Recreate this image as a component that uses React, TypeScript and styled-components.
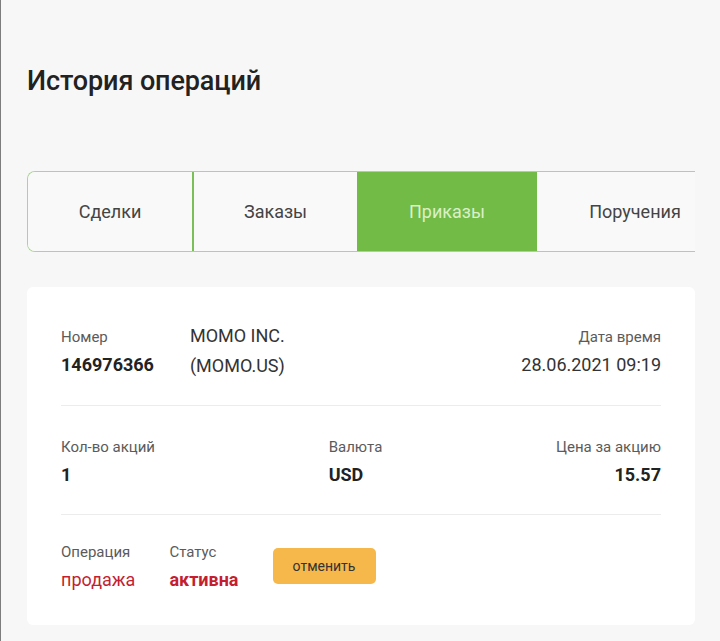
import React, { FC } from 'react';
import styled, { createGlobalStyle } from 'styled-components';

// ---------------- Global ---------------------
const GlobalStyle = createGlobalStyle`
    html, body {
        margin: 0;
        padding: 0;
        background: #f7f7f7;
    }
    body {
        font-family: Roboto, "Noto Sans", Arial, sans-serif;
        color: #222;
    }
`;

const Page = styled.div`
    min-height: 100vh;
    box-sizing: border-box;
    border-left: 1px solid #7d7d7d;
    padding: 64px 25px 20px 26px;
`;

const Title = styled.h1`
    margin: 0;
    font-size: 27px;
    line-height: 34px;
    font-weight: 500;
    color: #222;
    letter-spacing: -0.1px;
`;

// ---------------- Tabs ---------------------
const Tabs = styled.div`
    margin-top: 73px;
    display: flex;
    height: 81px;
    box-sizing: border-box;
    border: 1px solid #a9d592;
    border-right: none;
    border-radius: 8px 0 0 8px;
    overflow: hidden;
`;

const Tab = styled.button<{ $w: number; $active?: boolean; $divider?: boolean }>`
    flex: 0 0 ${(p) => p.$w}px;
    height: 100%;
    border: none;
    border-left: ${(p) => (p.$divider ? '2px solid #7cbf58' : 'none')};
    padding: 0;
    margin: 0;
    font-family: inherit;
    font-size: 18px;
    color: ${(p) => (p.$active ? '#d9f0c9' : '#444')};
    background: ${(p) => (p.$active ? '#72bb46' : '#f9f9f9')};
    cursor: pointer;
`;

// ---------------- Card ---------------------
const Card = styled.section`
    margin-top: 35px;
    background: #fff;
    border-radius: 6px;
    padding: 8px 34px 6px;
`;

const Row = styled.div<{ $spread?: boolean }>`
    display: flex;
    align-items: center;
    justify-content: ${(p) => (p.$spread ? 'space-between' : 'flex-start')};
    gap: ${(p) => (p.$spread ? '0' : '34px')};
    padding: 30px 0 26px;
    border-bottom: 1px solid #ececec;

    &:last-child {
        border-bottom: none;
        padding: 26px 0 26px;
    }
`;

const Field = styled.div<{ $right?: boolean; $push?: boolean }>`
    display: flex;
    flex-direction: column;
    gap: 4px;
    text-align: ${(p) => (p.$right ? 'right' : 'left')};
    margin-left: ${(p) => (p.$push ? 'auto' : '0')};
`;

const Label = styled.span`
    font-size: 15px;
    line-height: 22px;
    color: #5b5b5b;
`;

const Value = styled.span<{ $bold?: boolean; $red?: boolean }>`
    font-size: 18px;
    line-height: 26px;
    font-weight: ${(p) => (p.$bold ? 700 : 400)};
    color: ${(p) => (p.$red ? '#c41f31' : p.$bold ? '#222' : '#333')};
`;

const Company = styled.div`
    display: flex;
    flex-direction: column;
    gap: 4px;
    margin-left: 2px;
    margin-top: -2px;
    font-size: 18px;
    line-height: 26px;
    color: #333;
`;

const CancelButton = styled.button`
    width: 103px;
    height: 36px;
    margin-top: -2px;
    border: none;
    border-radius: 5px;
    background: #f6b84a;
    color: #333;
    font-family: inherit;
    font-size: 14px;
    cursor: pointer;
`;

type Props = {}

const App: FC<Props> = (props: Props) => {
    const tabs = [
        { title: 'Сделки', w: 164 },
        { title: 'Заказы', w: 165 },
        { title: 'Приказы', w: 180 },
        { title: 'Поручения', w: 196 },
    ];
    const activeTab = 2;

    return (
        <>
            <GlobalStyle />
            <Page>
                <Title>История операций</Title>

                <Tabs>
                    {tabs.map((t, i) => (
                        <Tab
                            key={t.title}
                            $w={t.w}
                            $active={i === activeTab}
                            $divider={i === 1}
                        >
                            {t.title}
                        </Tab>
                    ))}
                </Tabs>

                <Card>
                    <Row>
                        <Field>
                            <Label>Номер</Label>
                            <Value $bold>146976366</Value>
                        </Field>
                        <Company>
                            <span>MOMO INC.</span>
                            <span>(MOMO.US)</span>
                        </Company>
                        <Field $right $push>
                            <Label>Дата время</Label>
                            <Value>28.06.2021 09:19</Value>
                        </Field>
                    </Row>

                    <Row $spread>
                        <Field>
                            <Label>Кол-во акций</Label>
                            <Value $bold>1</Value>
                        </Field>
                        <Field>
                            <Label>Валюта</Label>
                            <Value $bold>USD</Value>
                        </Field>
                        <Field $right>
                            <Label>Цена за акцию</Label>
                            <Value $bold>15.57</Value>
                        </Field>
                    </Row>

                    <Row>
                        <Field>
                            <Label>Операция</Label>
                            <Value $red>продажа</Value>
                        </Field>
                        <Field>
                            <Label>Статус</Label>
                            <Value $red $bold>активна</Value>
                        </Field>
                        <CancelButton>отменить</CancelButton>
                    </Row>
                </Card>
            </Page>
        </>
    );
}
export default App;
